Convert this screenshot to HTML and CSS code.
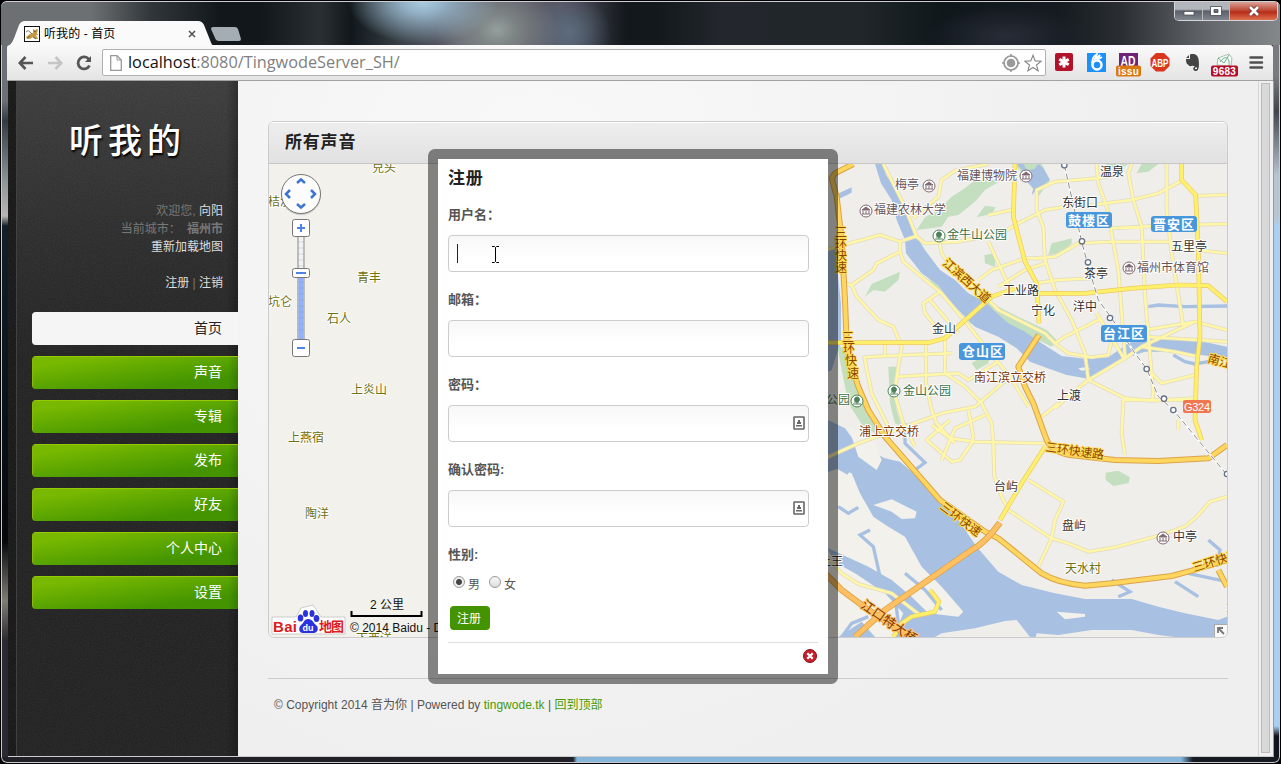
FILE: index.html
```
<!DOCTYPE html>
<html lang="zh-CN">
<head>
<meta charset="utf-8">
<title>听我的 - 首页</title>
<link rel="stylesheet" href="styles.css">
</head>
<body>
<div class="window">
  <header class="titlebar">
    <div class="tab">
      <svg class="tab-shape" viewBox="0 0 206 25"><path d="M0 25C4 23 5 20 8 12L11 4Q13 0 17 0H190Q194 0 196 4L202 19Q204 25 206 25Z" fill="#fafafa"/></svg>
      <svg class="favicon" viewBox="0 0 16 16"><rect x=".5" y=".5" width="15" height="15" fill="#fff" stroke="#111"/><path d="M9 3L11 4L13 3L14 4L13 7L14 9L12 9L14 13H11L9 11L6 13H3L2 11L6 8L9 7Z" fill="#c69a45"/><path d="M2 6Q4 3 6 6L8 8M3 12L6 10M9 11L12 13M10 5.500H12" stroke="#69573b" stroke-width=".8" fill="none"/></svg>
      <span class="tab-title">听我的 - 首页</span>
      <svg class="tab-close" viewBox="0 0 8 8"><path d="M1 1L7 7M7 1L1 7" stroke="#555" stroke-width="1.6"/></svg>
    </div>
    <svg class="new-tab" viewBox="0 0 30 14"><path d="M2 0H24Q26 0 27 2L30 12Q30 14 28 14H8Q5 14 4 11L0 2Q0 0 2 0Z" fill="#a5adb4"/></svg>
    <div class="controls">
      <span class="control"><svg viewBox="0 0 12 12"><rect x="1" y="6.500" width="10" height="3.500" fill="#fff" stroke="#454953" stroke-width=".7"/></svg></span>
      <span class="control"><svg viewBox="0 0 12 12"><path d="M.5 1.500H11.500V10.500H.5ZM4 4.500V7.500H8V4.500Z" fill="#fff" fill-rule="evenodd" stroke="#454953" stroke-width=".8"/></svg></span>
      <span class="control control-close"><svg viewBox="0 0 12 12"><path d="M2 2L10 10M10 2L2 10" stroke="#593536" stroke-width="4"/><path d="M2 2L10 10M10 2L2 10" stroke="#fff" stroke-width="2.600"/></svg></span>
    </div>
  </header>

  <nav class="toolbar">
    <svg class="nav-icon" viewBox="0 0 16 16"><path d="M7.500 2L1.800 8L7.500 14M2 8H15" fill="none" stroke="#555" stroke-width="2.600"/></svg>
    <svg class="nav-icon" viewBox="0 0 16 16"><path d="M8.500 2L14.200 8L8.500 14M14 8H1" fill="none" stroke="#c5c5c5" stroke-width="2.600"/></svg>
    <svg class="nav-icon" viewBox="0 0 16 16"><path d="M13 4.500A6 6 0 1 0 13.500 10.500" fill="none" stroke="#555" stroke-width="2.800"/><path d="M9 7H15V1Z" fill="#555"/></svg>
    <div class="omnibox">
      <svg class="page-icon" viewBox="0 0 12 16"><path d="M.7.700H7L11.300 5V15.300H.7Z" fill="#fff" stroke="#999" stroke-width="1.300"/><path d="M7 1V5H11" fill="none" stroke="#999"/></svg>
      <span class="url"><b>localhost</b>:8080/TingwodeServer_SH/</span>
      <svg class="geo-icon" viewBox="0 0 20 20"><circle cx="10" cy="10" r="7" fill="none" stroke="#999" stroke-width="1.700"/><circle cx="10" cy="10" r="4.300" fill="#999"/><path d="M10 1V4M10 16V19M1 10H4M16 10H19" stroke="#999" stroke-width="1.600"/></svg>
      <svg class="star-icon" viewBox="0 0 18 18"><path d="M9 1.200L11.200 6.900L17.200 7.200L12.500 11L14.100 16.800L9 13.500L3.900 16.800L5.500 11L.8 7.200L6.800 6.900Z" fill="#fff" stroke="#888" stroke-width="1.100"/></svg>
    </div>
    <div class="extensions">
      <svg viewBox="0 0 32 32"><rect x="7" y="6" width="18" height="18" rx="2" fill="#b3122c"/><path d="M16 9.500V20.500M11.300 12.300L20.700 17.700M20.700 12.300L11.300 17.700" stroke="#fff" stroke-width="3"/></svg>
      <svg viewBox="0 0 32 32"><rect x="7" y="6" width="19" height="19" fill="#1e90fa"/><circle cx="17" cy="18" r="4.500" fill="none" stroke="#fff" stroke-width="2.500"/><path d="M12.500 18C11 12 14 9 17 7L15 12L20 8L17 13L22 10" fill="none" stroke="#fff" stroke-width="1.700"/></svg>
      <svg viewBox="0 0 32 32"><rect x="7" y="6" width="19" height="14" fill="#6d2474"/><text class="ext-ad" x="16" y="19" textLength="15" lengthAdjust="spacingAndGlyphs">AD</text><rect x="4" y="18.500" width="25" height="11" rx="2" fill="#d97810"/><text class="ext-badge" x="16.500" y="28">issu</text></svg>
      <svg viewBox="0 0 32 32"><path d="M12 6H20L25.500 11.500V19L20 24.500H12L6.500 19V11.500Z" fill="#d9361d"/><text class="ext-abp" x="16" y="19.500" textLength="17" lengthAdjust="spacingAndGlyphs">ABP</text></svg>
      <svg viewBox="0 0 32 32"><path d="M10 11L13 8V11ZM14 7.500C18 6 22 8 22.500 12C23.500 18 23 24 20 24C16 24 17 19.500 19 19.500C16 17 14 21 12.500 18C11 17 10 16 10 12H14Z" fill="#444"/><path d="M19 20.500H21V22H19Z" fill="#f2f2f2"/></svg>
      <svg viewBox="0 0 32 32"><path d="M9 18L10 11L21 7L24 11L23 19Z" fill="#f7faf7" stroke="#a9bfae"/><path d="M10 11L16 16L21 8M12 15C18 7 22 11 21 19" fill="none" stroke="#6cb590"/><rect x="3" y="18.500" width="27" height="11" rx="2" fill="#b60d2b"/><text class="ext-badge" x="16.500" y="27.500">9683</text></svg>
      <svg viewBox="0 0 32 32"><path d="M10.500 10.500H22M10.500 15.500H22M10.500 20.500H22" stroke="#505050" stroke-width="2.500" stroke-linecap="round"/></svg>
    </div>
  </nav>

  <div class="page">
    <aside class="sidebar">
      <svg class="grain"><filter id="grain"><feTurbulence type="fractalNoise" baseFrequency=".8" numOctaves="2"/><feColorMatrix type="saturate" values="0"/></filter><rect width="100%" height="100%" filter="url(#grain)"/></svg>
      <h1 class="logo">听我的</h1>
      <div class="profile">
        <p>欢迎您, <a>向阳</a></p>
        <p class="city">当前城市： <b>福州市</b></p>
        <p><a>重新加载地图</a></p>
        <p class="profile-links"><a>注册</a> | <a>注销</a></p>
      </div>
      <ul class="menu">
        <li class="current">首页</li><li>声音</li><li>专辑</li><li>发布</li><li>好友</li><li>个人中心</li><li>设置</li>
      </ul>
    </aside>

    <main class="main">
      <section class="card">
        <h2 class="card-title">所有声音</h2>
        <svg class="map" viewBox="269 164 958 473">
          <defs>
            <g id="minor-roads">
              <path d="M175 162L235 280L275 380L300 400L400 395L530 370L570 345L600 330L660 300L720 290L800 285L920 270L1000 250L1070 212"/>
              <path d="M265 325L340 260L350 210L390 182L490 162M0 420L165 375L225 395L275 378M225 395V425L235 455L295 505L345 545L425 640L480 710L555 800L610 890"/>
              <path d="M225 425L155 460L145 480L80 525L95 560L160 630L205 650L230 710L220 770L208 850L235 940L270 1010M80 525L50 520M345 545L295 580L300 610L340 660M315 570L400 670M345 405L350 430L370 460L420 510L480 560L520 600L660 670"/>
              <path d="M180 700V740M380 730L240 735L118 742L140 850L190 950M303 700V820L320 900L335 940L390 1000M360 690V790L420 830L470 880L500 940L505 1000L508 1100L530 1160L550 1200L610 1240L680 1285L730 1300L790 1325L870 1312L990 1280L1080 1250L1115 1220L1155 1175L1206 1160"/>
              <path d="M215 800L300 795L400 790L430 810L520 755M555 800L450 890L350 910L240 950L100 1000L0 1045M660 445L600 445L500 480L460 510M490 395L550 525M560 300L490 315M520 530L600 480L660 460"/>
              <path d="M430 900L445 980L440 1000L405 1050L380 1055L305 990L375 930M480 915L390 955L350 1050M320 945L375 985L450 995L660 1000M700 880L650 920M1060 960V930M895 870L890 970L900 1035M895 870H1080M610 1110L715 1175L690 1230L680 1285L640 1370"/>
              <path d="M870 195L815 205L690 215L635 240V300L655 350L660 450L690 540L740 630L780 730L790 810M815 162L820 220L845 290L880 480L900 740M920 162L910 190L925 270L950 350L960 560L985 850L980 870M1025 162V300L1040 430L1075 650M1110 258L1206 254M630 445L690 440L760 400L860 395H1035L1065 415L1206 430M860 355L1050 345L1206 342"/>
              <path d="M690 700L720 680L830 625M690 700L730 730L800 742L850 735L860 690M790 810L850 775L900 745L950 710L1050 725L1120 740M815 610L900 750M960 660L1110 635L1206 660M960 680L1206 695M790 810L850 840L900 865L980 872L1110 865M950 710L1110 635M980 790L1010 820L1110 795M630 520L700 510L800 505M660 670L690 700M790 810L740 850L690 895"/>
            </g>
            <path id="main-roads" d="M570 162L565 320L600 455L635 520L642 640M0 698H310L360 685L410 640L500 560L570 535M640 550H780L920 535L1060 525L1150 527L1206 575M1070 162V210L1112 255L1120 420L1125 680L1115 770L1110 930L1130 990M660 1010L590 1120L525 1230"/>
            <path id="highways" d="M85 162L30 190L20 205L35 260L50 390L60 570L65 700L80 770L100 830L130 900L180 980L345 1170L480 1265L520 1285L650 1390Q700 1420 780 1427L860 1420L1040 1398L1100 1382L1206 1350M642 675L580 770L600 830L625 880L665 990Q680 1025 735 1035L870 1050L1000 1053L1150 1045L1206 1005M1180 1380L1206 1430"/>
            <path id="bridges" d="M525 1238Q480 1300 440 1320L180 1500L90 1581M0 1390L50 1440L130 1500L270 1590"/>
            <path id="metro" d="M718 165L770 395L790 470L820 570L860 625L930 730L965 777L1000 860L1045 900L1206 1095"/>
            <g id="museum"><circle r="6"/><path d="M-4-1L0-4L4-1ZM-3 0V3M0 0V3M3 0V3M-4 3H4"/></g>
            <g id="tree"><circle r="6"/><path d="M0-4A2.500 2.500 0 1 1-.1-4M0 0V3M-4 3H4M-3 1H2"/></g>
          </defs>
          <rect x="269" y="164" width="570" height="473" fill="#f2f1eb"/>
          <rect x="828" y="164" width="400" height="473" fill="#efeeea"/>
          <g transform="translate(825 110) scale(.33333)">
            <g class="park">
              <path d="M275 360L300 322L340 300L380 260L420 235L450 210H530L480 240L450 275L400 315L370 320L350 350Z"/>
              <path d="M455 322L480 287L512 292L500 312ZM120 560L140 522L190 500L225 485L220 510L180 545L145 540ZM478 435L510 430V470L480 460Z"/>
              <path d="M190 770H215L205 830L215 900L230 950L210 940L195 880ZM35 700L65 725L85 760L100 850L150 930V970L115 950L70 880L50 780Z"/>
              <path d="M480 560L520 590L580 620L665 660L700 695L680 710L640 690L560 655L490 620ZM275 460L360 520L415 590L450 645L435 640L390 575L330 530Z"/>
              <path d="M670 435L680 400L720 390L740 385V400L710 430ZM935 190L950 162H1000L970 185ZM840 162H910L880 180ZM570 162H650L675 210L640 260L605 210Z"/>
              <path d="M440 760L500 720L490 760L455 780ZM842 1088L880 1082L915 1102L910 1120L865 1128L842 1110Z"/>
            </g>
            <g class="water">
              <path d="M150 162L168 220L200 270L215 330L240 390L243 430L290 490L340 525L365 560L400 600L450 650L520 680L575 715L615 755L660 772L725 795L790 806L850 770L900 745L960 725H1050L1206 745V710L1110 690L1030 680H960L910 700L850 742L780 746L710 738L650 700L600 665L550 640L505 600L480 575L430 550L390 510L345 480L300 420L275 380L258 330L235 290L215 240L183 195L175 162Z"/>
              <path d="M30 255L80 232V248L30 272ZM575 162L590 178L600 210L625 235L620 255L645 230L675 210L655 175L640 162L628 178L605 180L595 162Z"/>
              <path d="M9 930L60 955L90 995L130 1020L180 1045L225 1055L260 1085L345 1170L400 1230L455 1310L520 1385L590 1425L690 1450L780 1467H920L1000 1490L1080 1510L1180 1530L1206 1520V1581H1050L1000 1575L920 1560H800L700 1575L635 1570L632 1581H615L575 1530L540 1533L450 1555L350 1570L330 1581H0V1480L50 1400L0 1300Z"/>
              <path d="M0 420L30 415L48 580V690L20 780L0 790Z"/>
            </g>
            <path fill="#f2f1eb" d="M0 1090L40 1075L80 1090L105 1150L145 1220L190 1250L240 1280L290 1370L350 1430L415 1505L400 1520L310 1510L260 1460L200 1410L130 1370L0 1310ZM0 1340L90 1390L180 1450L235 1510L205 1581H150L110 1535L40 1581H0ZM145 1185L200 1168L275 1205L270 1225L230 1227L200 1205ZM695 1505L780 1512V1520L720 1528ZM70 950L140 980L170 1050L155 1080L100 1040ZM760 775L790 770L795 778L770 782Z"/>
            <path class="channel" d="M40 1190L70 1210L100 1192M135 1260L105 1275L145 1310L165 1400L210 1460L220 1540M240 1390L300 1440L350 1500M130 1520L80 1540L50 1581M240 940V1000L300 1058L270 1080M970 590L1000 585L1080 590L1206 588M1045 735L1080 755L1110 762L1150 755M1150 1290L1185 1320L1175 1370M1090 1390L1206 1415M1050 1415L1120 1460M860 1410L915 1445L880 1460M50 1020L35 1070L70 1090"/>
            <g class="line"><use class="minor-edge" href="#minor-roads"/><use class="minor" href="#minor-roads"/>
              <path class="minor-edge" d="M0 1335L50 1390L100 1422L200 1450L285 1515"/><path class="minor" d="M0 1335L50 1390L100 1422L200 1450L285 1515"/>
              <use class="road-edge" href="#main-roads"/><use class="road" href="#main-roads"/>
              <path class="road-edge" d="M205 1581L230 1540L260 1520L330 1505L342 1475L315 1440"/><path class="road" d="M205 1581L230 1540L260 1520L330 1505L342 1475L315 1440"/>
              <use class="highway-edge" href="#highways"/><use class="highway" href="#highways"/>
              <use class="bridge-edge" href="#bridges"/><use class="bridge" href="#bridges"/>
              <use class="metro-bed" href="#metro"/><use class="metro" href="#metro"/>
            </g>
            <g fill="#fff" stroke="#66718a" stroke-width="4"><circle cx="718" cy="166" r="8"/><circle cx="771" cy="394" r="8"/><circle cx="789" cy="457" r="8"/><circle cx="855" cy="624" r="8"/><circle cx="965" cy="777" r="8"/><circle cx="1017" cy="866" r="8"/><circle cx="1045" cy="900" r="8"/><circle cx="1206" cy="1092" r="8"/></g>
          </g>

          <g class="labels">
            <g class="village">
              <text x="372" y="172">兑头</text><text x="268" y="206">桔溪</text><text x="357" y="282">青丰</text><text x="268" y="306">坑仑</text><text x="327" y="323">石人</text><text x="351" y="394">上炎山</text><text x="288" y="442">上燕宿</text><text x="305" y="518">陶洋</text><text x="356" y="643">下西洋</text><text x="1065" y="573">天水村</text>
            </g>
            <g class="place">
              <text x="1100" y="176">温泉</text><text x="1062" y="207">东街口</text><text x="1171" y="251">五里亭</text><text x="1084" y="278">茶亭</text><text x="1003" y="295">工业路</text><text x="1031" y="315">宁化</text><text x="1073" y="311">洋中</text><text x="932" y="333">金山</text><text x="1057" y="400">上渡</text><text x="994" y="491">台屿</text><text x="1062" y="530">盘屿</text><text x="1173" y="541">中亭</text><text x="1226" y="611">量</text><text x="819" y="566">上王</text>
            </g>
            <g class="venue"><text x="895" y="189">梅亭</text><text x="957" y="180">福建博物院</text><text x="874" y="214">福建农林大学</text><text x="1137" y="272">福州市体育馆</text></g>
            <g class="garden"><text x="947" y="239">金牛山公园</text><text x="903" y="395">金山公园</text><text x="826" y="404">公园</text></g>
            <g class="junction"><text x="974" y="382">南江滨立交桥</text><text x="859" y="436">浦上立交桥</text></g>
            <g class="highway-name">
              <text x="835" y="237">三</text><text x="835" y="249">环</text><text x="835" y="260">快</text><text x="835" y="272">速</text>
              <text x="842" y="342">三</text><text x="843" y="353">环</text><text x="845" y="365">快</text><text x="847" y="378">速</text>
              <text transform="translate(942 264) rotate(42)" textLength="59">江滨西大道</text>
              <text transform="translate(1045 451) rotate(8)" textLength="59">三环快速路</text>
              <text transform="translate(939 508) rotate(37)" textLength="48">三环快速</text>
              <text transform="translate(1194 572) rotate(-17)">三环快速</text>
              <text transform="translate(1207 362) rotate(16)">南江滨</text>
            </g>
            <text class="bridge-name" transform="translate(860 607) rotate(35)" textLength="65">江口特大桥</text>
            <g fill="#4897dc"><rect x="1066" y="212" width="46" height="16" rx="3"/><rect x="1151" y="216" width="46" height="16" rx="3"/><rect x="1101" y="325" width="46" height="17" rx="3"/><rect x="959" y="343" width="46" height="17" rx="3"/></g>
            <g class="district"><text x="1068" y="225">鼓楼区</text><text x="1153" y="229">晋安区</text><text x="1103" y="338">台江区</text><text x="962" y="356">仓山区</text></g>
            <rect x="1183" y="400" width="28" height="13" rx="2" fill="#f07850"/><text class="highway-number" x="1184" y="411" textLength="26">G324</text>
          </g>
          <g class="poi museum"><g transform="translate(929 186)"><use href="#museum"/></g><g transform="translate(1026 176)"><use href="#museum"/></g><g transform="translate(866 211)"><use href="#museum"/></g><g transform="translate(1129 268)"><use href="#museum"/></g><g transform="translate(1163 538)"><use href="#museum"/></g></g>
          <g class="poi trees"><g transform="translate(939 236)"><use href="#tree"/></g><g transform="translate(894 391)"><use href="#tree"/></g><g transform="translate(857 401)"><use href="#tree"/></g></g>

          <circle cx="301" cy="195" r="20" fill="#777" opacity=".35"/><circle cx="301" cy="194" r="19.500" fill="#fcfcfd" stroke="#777"/>
          <path d="M297 183L301 179.500L305 183M297 204L301 207.500L305 204M290 190L286 194L290 198M311 190L315 194L311 198" fill="none" stroke="#3d74d3" stroke-width="2.500"/>
          <rect x="298" y="236" width="6" height="104" fill="#f2f2f2" stroke="#888"/><rect x="298.500" y="275" width="5" height="64" fill="#91b2fa"/>
          <path d="M298 242H304M298 248H304M298 254H304M298 260H304M298 266H304M298 282H304M298 288H304M298 294H304M298 300H304M298 306H304M298 312H304M298 318H304M298 324H304M298 330H304" stroke="#789" stroke-width=".5" opacity=".5"/>
          <g fill="#fff" stroke="#777"><rect x="292.500" y="219.500" width="17" height="17" rx="2"/><rect x="292.500" y="268.500" width="17" height="9" rx="2"/><rect x="292.500" y="339.500" width="17" height="17" rx="2"/></g>
          <path d="M297 228H305M301 224V232M296 273H306M297 348H305" stroke="#4f83e8" stroke-width="2"/>

          <path d="M272 617H296L301 608L313 605L321 617H345V634H272Z" fill="#fff" stroke="#ccc" stroke-linejoin="round"/>
          <text class="brand" x="273" y="632" textLength="24">Bai</text><text class="brand brand-map" x="319" y="631" textLength="25">地图</text>
          <g fill="#2932dc"><ellipse cx="300.500" cy="618" rx="2.800" ry="3.500"/><ellipse cx="305.500" cy="613.500" rx="2.500" ry="3.500"/><ellipse cx="312" cy="613.500" rx="2.500" ry="3.500"/><ellipse cx="316.500" cy="618.500" rx="2.800" ry="3.500"/><path d="M308 619C313 619 313 623 317 626C319 629 317 633 314 633H303C299 633 298 628 301 625C304 623 304 619 308 619Z"/></g><text class="paw-text" x="302.500" y="631">du</text>
          <g class="scale-text"><text x="370" y="609">2 公里</text><text x="350" y="632">© 2014 Baidu - Data</text></g>
          <path d="M351.500 611V616H421.500V611" fill="none" stroke="#000" stroke-width="2"/>
          <rect x="1214.500" y="624.500" width="13" height="13" fill="#f9f9f9" stroke="#aaa"/><path d="M1218 633V628H1223M1218 628L1224 634" fill="none" stroke="#777" stroke-width="1.800"/>
        </svg>
      </section>
      <footer class="footer">© Copyright 2014 音为你 | Powered by <a>tingwode.tk</a> | <a>回到顶部</a></footer>
    </main>
    <div class="scrollbar"><div class="thumb"></div></div>
  </div>

  <div class="modal">
    <h2 class="modal-title">注册</h2>
    <form class="form">
      <label>用户名：</label>
      <div class="field"><i class="caret"></i><svg class="ibeam" viewBox="0 0 9 17"><path d="M1 .5H3.500L4.500 1.500L5.500.500H8M4.500 1.500V15.500M1 16.500H3.500L4.500 15.500L5.500 16.500H8" fill="none" stroke="#000"/></svg></div>
      <label>邮箱：</label>
      <div class="field"></div>
      <label>密码：</label>
      <div class="field"><svg class="key-icon" viewBox="0 0 12 14"><rect x="1" y="1" width="10" height="12" rx=".5" fill="#fff" stroke="#666" stroke-width="1.600"/><path d="M5 4H7V6H8V8H4V6H5ZM3 9H9V10.500H3Z" fill="#666"/></svg></div>
      <label>确认密码:</label>
      <div class="field"><svg class="key-icon" viewBox="0 0 12 14"><rect x="1" y="1" width="10" height="12" rx=".5" fill="#fff" stroke="#666" stroke-width="1.600"/><path d="M5 4H7V6H8V8H4V6H5ZM3 9H9V10.500H3Z" fill="#666"/></svg></div>
      <label>性别:</label>
      <div class="choices"><i class="radio checked"></i><span>男</span><i class="radio"></i><span>女</span></div>
      <span class="submit">注册</span>
    </form>
    <div class="modal-foot"><svg class="dismiss" viewBox="0 0 14 14"><circle cx="7" cy="7" r="6.500" fill="#c81f2c" stroke="#8c0c17"/><path d="M4.300 4.300L9.700 9.700M9.700 4.300L4.300 9.700" stroke="#fff" stroke-width="2.300"/></svg></div>
  </div>
</div>
</body>
</html>
```
FILE: styles.css
```
* { box-sizing: border-box; }
body { margin: 0; background: #000; font: 12px/18px "Liberation Sans", "Noto Sans CJK SC", sans-serif; color: #555; }
svg { display: block; flex: none; }
h1, h2, p, ul { margin: 0; padding: 0; }
.window {
  position: relative; width: 1281px; height: 764px; padding: 0 6px 6px; overflow: hidden;
  display: flex; flex-direction: column; border: 1px solid #000; border-radius: 7px;
  box-shadow: inset 0 0 0 1px #c9c9cf;
  background:
    linear-gradient(90deg, #222027 0 572px, #87b6dc 576px 1180px, #161b22 1192px) 0 100% / 100% 6px no-repeat,
    linear-gradient(#777b80 0 75px, #41464b 110px, #b7c5d2 175px 215px, #aacff2 226px 725px, #10151c 735px) 100% 0 / 7px 100% no-repeat,
    linear-gradient(#6b7077 0 100px, #343a41 120px, #8c9498 180px, #bab6b5 215px, #10202c 225px, #05080c 540px, #807c74 600px, #2b2931 640px) 0 0 / 7px 100% no-repeat,
    #202529;
}
.titlebar {
  height: 44px; margin: 0 -6px; padding: 20px 2px 0 9px; display: flex; align-items: flex-start; flex: none;
  border-top: 1px solid #cecfd6; border-radius: 6px 6px 0 0;
  background:
    radial-gradient(ellipse 75px 42px at 422px 0, #a9cbe2 0, #95b3c8 25%, transparent),
    radial-gradient(ellipse 62px 50px at 496px 28px, #94a09c 0, #858e8cd0 30%, transparent),
    radial-gradient(ellipse 42px 42px at 568px 30px, #5c6c7e 0, transparent),
    radial-gradient(ellipse 80px 30px at 1005px 34px, #282c37, transparent),
    linear-gradient(90deg, #6d7073 0 90px, #30363a 150px, #12171b 220px 260px, #292f33 320px, #11171b 350px, #3a4248 400px, #60606c 460px, #555260 560px, #12181c 625px 655px, #23272d 720px, #20262a 860px, #10171b 940px, #151b20 1060px, #2a2e32 1120px, #65696d 1210px, #85888a);
}
.tab { position: relative; width: 206px; height: 25px; margin: -1px 0 0 -2px; padding: 1px 18px 0 16px; display: flex; align-items: center; color: #000; }
.tab-shape { position: absolute; inset: 0; width: 206px; height: 25px; }
.favicon { position: relative; width: 16px; height: 16px; }
.tab-title { position: relative; margin-left: 4px; white-space: pre; letter-spacing: .1px; }
.tab-close { position: relative; width: 8px; height: 8px; margin-left: auto; }
.new-tab { width: 30px; height: 14px; margin: 5px 0 0 -3px; }
.controls { height: 19px; margin: -20px 0 0 auto; display: flex; border: 1px solid #d2d5da; border-top: 0; border-radius: 0 0 5px 5px; overflow: hidden; }
.control { width: 28px; display: grid; place-items: center; border-right: 1px solid #b6babd; background: linear-gradient(#b2b5bb 0 40%, #5a606a 50%, #81868e); }
.control + .control { width: 27px; }
.control svg { width: 12px; height: 12px; }
.control + .control-close { width: 47px; border: 0; background: linear-gradient(#dba297, #bc412e 50%, #b52b17 55%, #e07050); }
.toolbar { height: 36px; padding: 0 0 0 11px; display: flex; align-items: center; flex: none; border-radius: 3px 3px 0 0; background: linear-gradient(#fafafa, #e4e4e4); border-bottom: 1px solid #a2a2a2; margin-right: 1px; }
.nav-icon { width: 16px; height: 16px; margin-right: 13px; }
.omnibox { width: 944px; height: 27px; margin-left: -3px; padding: 0 3px 0 7px; display: flex; align-items: center; border: 1px solid #b0b0b0; border-radius: 2px; background: #fff; }
.page-icon { width: 12px; height: 16px; }
.url { margin: -2px auto 0 6px; font: 16.3px/22px "Open Sans", sans-serif; color: #808080; }
.url b { color: #111; font-weight: 400; }
.geo-icon { width: 20px; height: 20px; margin-right: 3px; }
.star-icon { width: 18px; height: 18px; }
.extensions { display: flex; margin-left: 2px; }
.extensions svg { width: 32px; height: 32px; }
.extensions text { font-family: "Liberation Sans"; font-weight: 700; fill: #fff; text-anchor: middle; }
.ext-ad { font-size: 14px; }
.ext-badge { font-size: 10px; letter-spacing: .3px; }
.ext-abp { font-size: 10px; }
.page { height: 676px; flex: none; display: flex; border-right: 1px solid #999; border-bottom: 1px solid #ccc; margin-left: 1px; background: #efefef; }
.sidebar {
  position: relative; width: 230px; flex: none; padding-left: 24px;
  background:
    linear-gradient(90deg, #151515 0 8px, #3b3b3b 8px 9px, transparent 9px 218px, #00000050),
    linear-gradient(#3b3b3b, #282828 180px, #202020 280px);
}
.grain { position: absolute; inset: 0; width: 100%; height: 100%; opacity: .1; }
.logo { position: relative; height: 121px; padding: 35px 0 0 37px; font: 500 34px/46px "Noto Sans CJK SC"; letter-spacing: 5px; color: #fff; text-shadow: 1px 2px 2px #000; }
.profile { position: relative; padding-right: 15px; text-align: right; color: #777; }
.profile a { color: #ddd; }
.city { word-spacing: 3px; }
.profile-links { margin-top: 18px; }
.menu { position: relative; display: grid; gap: 11px; margin-top: 20px; list-style: none; }
.menu li { height: 33px; padding-right: 16px; border-top: 1px solid #95c900; border-left: 1px solid #87bd00; border-radius: 4px 0 0 4px; font-size: 14px; line-height: 30px; text-align: right; color: #fff; background: linear-gradient(90deg, transparent 195px, #00000028), linear-gradient(172deg, #78b900 15%, #439400 78%); }
.menu .current { color: #222; background: #f5f5f5; border-color: #f5f5f5; }
.main { width: 1020px; flex: none; padding: 40px 30px; background: radial-gradient(circle at 300px 100px, #f9f9f9, #efefef 620px); }
.card { width: 960px; height: 517px; border: 1px solid #ccc; border-radius: 6px; overflow: hidden; }
.card-title { height: 42px; padding-left: 16px; border-bottom: 1px solid #c8c8c8; box-shadow: inset 0 1px #fff; background: linear-gradient(#eee, #e1e1e1); font-size: 17px; line-height: 42px; letter-spacing: .8px; color: #222; }
.map { width: 958px; height: 473px; }
.park { fill: #c3dfc0; }
.water { fill: #a8c1e2; }
.channel { fill: none; stroke: #a8c1e2; stroke-width: 10; }
.line { fill: none; stroke-linejoin: round; }
.minor-edge { stroke: #e2dcc0; stroke-width: 12; }
.minor { stroke: #fff6a8; stroke-width: 7.5; }
.road-edge { stroke: #ecc964; stroke-width: 14; }
.road { stroke: #fff06c; stroke-width: 10; }
.highway-edge { stroke: #dba34a; stroke-width: 18; }
.highway { stroke: #ffd65e; stroke-width: 12; }
.bridge-edge { stroke: #dda047; stroke-width: 19; }
.bridge { stroke: #ffc061; stroke-width: 14; }
.metro-bed { stroke: #fff; stroke-width: 6; }
.metro { stroke: #777; stroke-width: 2.5; stroke-dasharray: 18 9; }
.labels text { font: 12px "Noto Sans CJK SC", sans-serif; paint-order: stroke; stroke: #fff; stroke-width: 2px; stroke-linejoin: round; }
.village { fill: #6f7011; }
.place { fill: #333; }
.venue { fill: #66545b; }
.garden { fill: #397047; }
.junction { fill: #7d3807; }
.labels .highway-name text { fill: #8b4500; stroke: #ffdc54; }
.labels .bridge-name { fill: #7d3807; stroke: #ffc061; font-size: 13px; }
.labels .district text { fill: #fff; stroke: none; font-weight: 700; font-size: 13px; letter-spacing: 1px; }
.labels .highway-number { fill: #fff; stroke: none; font: 11px "Liberation Sans"; }
.poi circle { fill: #fff; stroke: currentColor; }
.poi path { fill: currentColor; stroke: currentColor; stroke-width: 1; }
#museum circle, #tree circle { fill: #fff; stroke: currentColor; }
#museum path, #tree path { fill: currentColor; stroke: currentColor; }
.museum { color: #806a72; }
.trees { color: #4c825a; }
.brand { font: 700 15px "Liberation Sans", sans-serif; fill: #dc1c20; }
.brand-map { font: 700 13px "Noto Sans CJK SC"; }
.paw-text { font: 700 9px "Liberation Sans"; fill: #fff; }
.scale-text { font: 12px "Liberation Sans", "Noto Sans CJK SC"; fill: #111; }
.footer { margin-top: 40px; padding: 17px 6px 0; border-top: 1px solid #ccc; letter-spacing: .01px; }
.footer a { color: #4b9a00; }
.scrollbar { width: 16px; padding: 2px 3px 3px 2px; border-left: 1px solid #d5d5d5; background: #f0f0f0; }
.thumb { height: 100%; border: 1px solid #bbb; background: #d9d9d9; }
.modal { position: absolute; left: 427px; top: 148px; width: 410px; height: 535px; padding: 10px; border: 10px solid rgba(0,0,0,.46); border-radius: 7px; background: #fff; background-clip: padding-box; }
.modal-title { height: 36px; font-size: 17px; line-height: 19px; letter-spacing: .8px; color: #222; }
.form { display: flex; flex-direction: column; align-items: flex-start; }
.form label { height: 18px; margin-bottom: 12px; font-size: 13px; line-height: 19px; font-weight: 700; }
.field { position: relative; width: 361px; height: 37px; margin-bottom: 18px; padding: 8px; border: 1px solid #ccc; border-radius: 4px; background: linear-gradient(#f7f7f7, #fff 65%); }
.caret { display: block; width: 1px; height: 19px; background: #222; }
.ibeam { position: absolute; left: 42px; top: 10px; width: 9px; height: 17px; }
.key-icon { width: 12px; height: 14px; margin: 2px -5px 0 auto; }
.form label:nth-of-type(5) { margin-bottom: 1px; }
.choices { height: 42px; padding: 12px 0 0 5px; display: flex; }
.radio { width: 12px; height: 12px; border: 1px solid #999; border-radius: 50%; background: linear-gradient(#f8f8f8, #ddd); }
.checked { background: radial-gradient(circle, #444 0 2.5px, #eee 3.5px); }
.choices span { width: 12px; margin: 0 9px 0 3px; }
.submit { width: 40px; height: 24px; margin-left: 2px; padding-right: 2px; border-radius: 4px; background: #439400; color: #fff; line-height: 27px; text-align: center; }
.modal-foot { margin-top: 12px; padding: 6px 1px 0; border-top: 1px solid #ddd; }
.dismiss { width: 14px; height: 14px; margin-left: auto; }
```
